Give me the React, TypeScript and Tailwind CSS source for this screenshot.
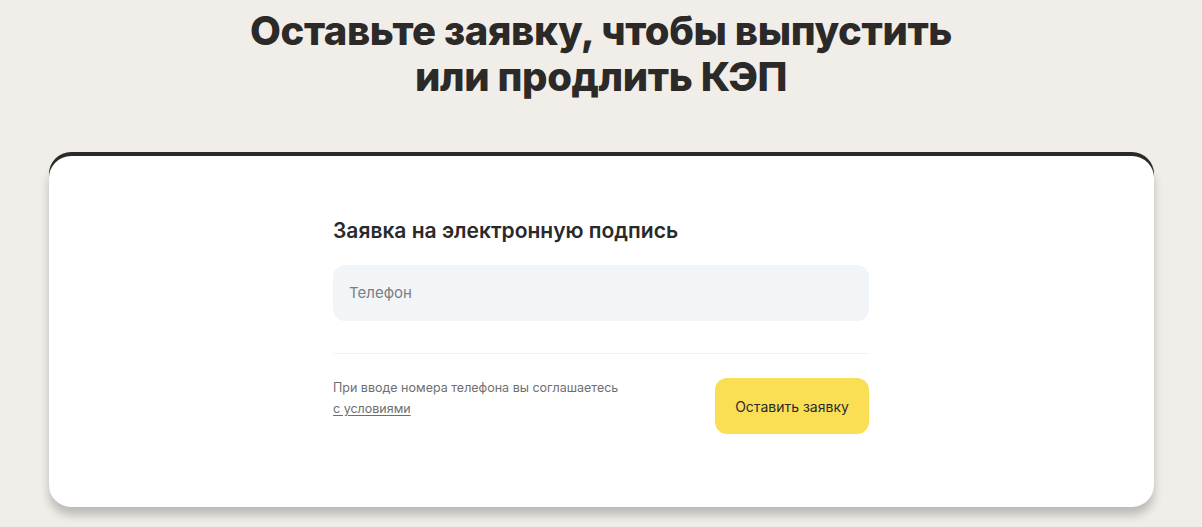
import React from "react";

export default function App() {
  return (
    <div
      className="min-h-[527px] w-full bg-[#f1eee9] flex flex-col items-center pt-[8px]"
      style={{ fontFamily: "Inter, 'Noto Sans', sans-serif" }}
    >
      <h1 className="text-center text-[40px] leading-[46px] font-extrabold text-[#2b2a28] tracking-[-0.4px]">
        Оставьте заявку, чтобы выпустить
        <br />
        или продлить КЭП
      </h1>
      <div className="mt-[56px] w-[1105px] bg-white rounded-[22px] shadow-[0_-4px_0_#2b2a28,0_8px_10px_rgba(0,0,0,0.22)] flex justify-center pt-[60px] pb-[73px]">
        <div className="w-[536px] flex flex-col">
          <h2 className="text-[21px] leading-[30px] font-semibold text-[#2a2a2a]">
            Заявка на электронную подпись
          </h2>
          <div className="mt-[19px] h-[56px] rounded-[12px] bg-[#f2f5f8] flex items-center px-4 text-[15px] text-[#7b7e83]">
            Телефон
          </div>
          <div className="mt-[32px] h-px bg-[#f1f1f1]" />
          <div className="mt-[24px] flex items-start justify-between">
            <div className="text-[12.5px] leading-[21px] text-[#6f6f6f] -mt-px">
              <div>При вводе номера телефона вы соглашаетесь</div>
              <a className="underline underline-offset-2">с условиями</a>
            </div>
            <button className="w-[154px] h-[56px] rounded-[12px] bg-[#fadf55] text-[14px] text-[#2a2a2a]">
              Оставить заявку
            </button>
          </div>
        </div>
      </div>
    </div>
  );
}
